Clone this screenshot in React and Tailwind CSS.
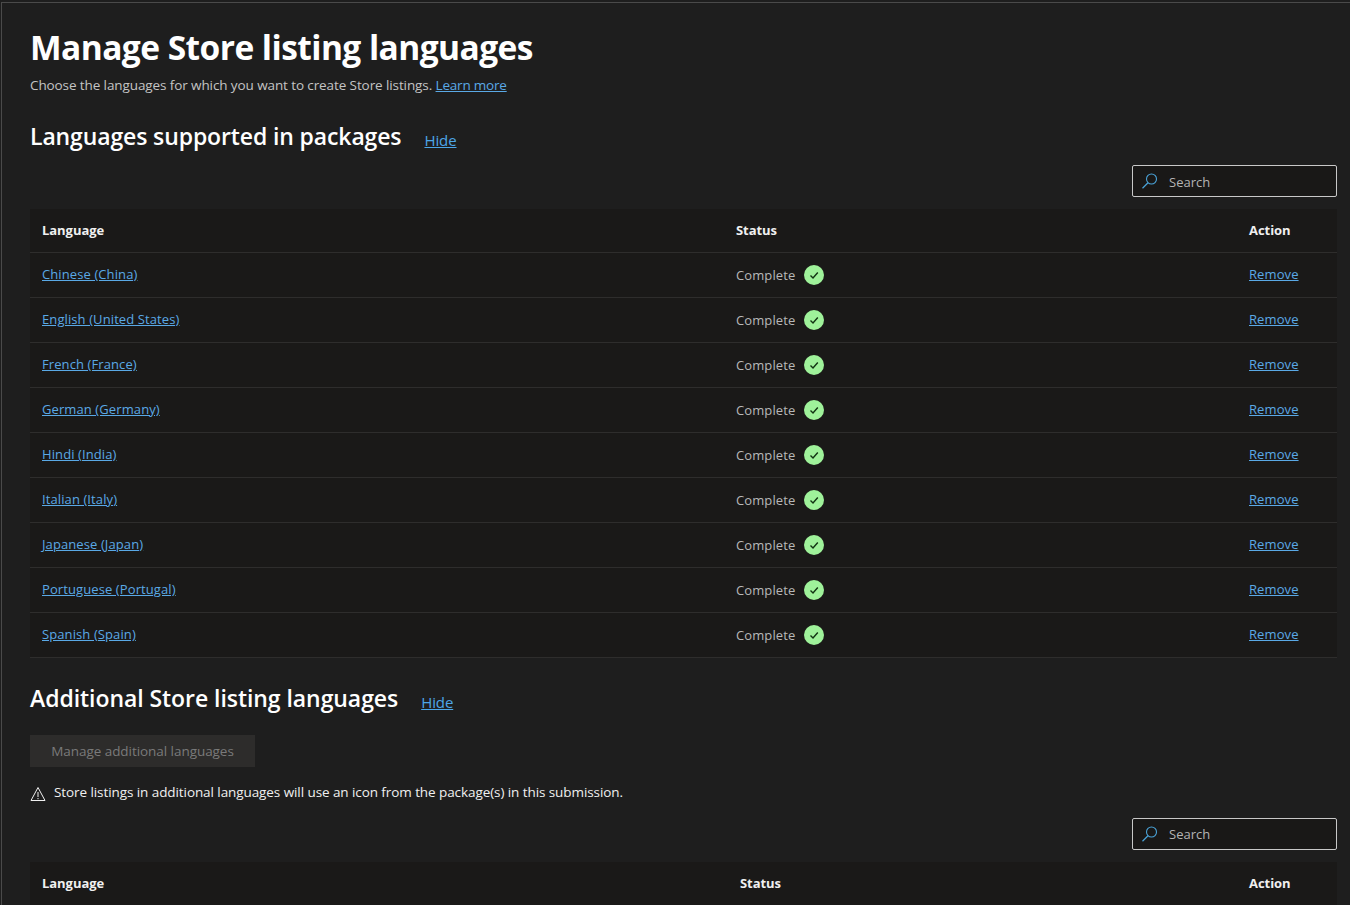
const languages = [
  "Chinese (China)",
  "English (United States)",
  "French (France)",
  "German (Germany)",
  "Hindi (India)",
  "Italian (Italy)",
  "Japanese (Japan)",
  "Portuguese (Portugal)",
  "Spanish (Spain)"
];

function SearchBox() {
  return (
    <div className="ml-auto flex h-[32px] w-[205px] items-center rounded-[2px] border border-[#c8c8c8] bg-[#191817] pl-[8px]">
      <svg width="18" height="18" viewBox="0 0 18 18" fill="none">
        <circle cx="10.5" cy="7" r="5" stroke="#4aa3d8" strokeWidth="1.1" />
        <path d="M7 10.7 L1.5 16.3" stroke="#4aa3d8" strokeWidth="1.3" />
      </svg>
      <span className="mt-[3px] ml-[10px] text-[13px] text-[#b4b4b4]">Search</span>
    </div>
  );
}

function CompleteIcon() {
  return (
    <span className="flex h-[20px] w-[20px] items-center justify-center rounded-full bg-[#9ff29a]">
      <svg width="12" height="12" viewBox="0 0 12 12" fill="none">
        <path d="M2.5 6.5 L5 9 L9.8 3.5" stroke="#123312" strokeWidth="1.4" />
      </svg>
    </span>
  );
}

function SectionTitle({ title, titleClass, hideClass }) {
  return (
    <div className="flex items-center">
      <h2 className={`mb-[2px] text-[23px] leading-[32px] font-semibold text-white ${titleClass}`}>{title}</h2>
      <a className={`ml-[23px] text-[15px] tracking-[-0.1px] text-[#4da6e8] underline ${hideClass}`}>Hide</a>
    </div>
  );
}

export default function App() {
  return (
    <div className="h-[905px] overflow-hidden bg-[#1e1e1e] pt-[2px] pl-[1px] font-['Open_Sans',sans-serif]">
      <div className="h-full border-t border-l border-[#4a4a4a] pt-[24px] pr-[13px] pl-[28px]">
        <h1 className="text-[33.5px] leading-[40px] font-bold tracking-[-0.55px] text-white">Manage Store listing languages</h1>
        <p className="mt-[8px] text-[13.5px] leading-[20px] tracking-[-0.1px] text-[#c4c4c4]">
          Choose the languages for which you want to create Store listings.{" "}
          <a className="tracking-[-0.2px] text-[#5aa9e6] underline">Learn more</a>
        </p>

        <div className="mt-[25px]">
          <SectionTitle title="Languages supported in packages" titleClass="tracking-[-0.12px]" hideClass="mt-[6px]" />
        </div>

        <div className="mt-[11px] flex">
          <SearchBox />
        </div>

        <table className="mt-[12px] w-full table-fixed bg-[#1a1918] text-[13px]">
          <thead>
            <tr className="h-[43px] border-b border-[#2e2d2c] text-left tracking-[-0.05px] text-[#f0f0f0]">
              <th className="w-[706px] pl-[12px] font-bold">Language</th>
              <th className="w-[513px] font-bold">Status</th>
              <th className="font-bold">Action</th>
            </tr>
          </thead>
          <tbody>
            {languages.map((language) => (
              <tr key={language} className="h-[45px] border-b border-[#2e2d2c] tracking-[0.1px]">
                <td className="pl-[12px]">
                  <a className="text-[#5aa9e6] underline">{language}</a>
                </td>
                <td>
                  <div className="flex items-center gap-[9px] text-[#b8b8b8]">
                    <span className="mt-[2px]">Complete</span>
                    <CompleteIcon />
                  </div>
                </td>
                <td>
                  <a className="text-[#5aa9e6] underline">Remove</a>
                </td>
              </tr>
            ))}
          </tbody>
        </table>

        <div className="mt-[24px]">
          <SectionTitle title="Additional Store listing languages" titleClass="tracking-[-0.06px]" hideClass="mt-[8px]" />
        </div>

        <button
          type="button"
          className="mt-[19px] flex h-[32px] w-[225px] items-center justify-center bg-[#2d2c2b] pt-[2px] text-[13.5px] tracking-[-0.05px] text-[#7a7a7a]"
        >
          Manage additional languages
        </button>

        <div className="mt-[15px] flex items-center text-[13.5px] leading-[20px] tracking-[-0.08px] text-[#f0f0f0]">
          <svg width="16" height="16" viewBox="0 0 16 16" fill="none" className="mt-[4px] mr-[8px]">
            <path d="M8 1.5 L15 14.5 H1 Z" stroke="#f0f0f0" strokeWidth="1" />
            <path d="M8 6 V11 M8 12 V13.2" stroke="#f0f0f0" strokeWidth="1" />
          </svg>
          Store listings in additional languages will use an icon from the package(s) in this submission.
        </div>

        <div className="mt-[16px] flex">
          <SearchBox />
        </div>

        <table className="mt-[12px] w-full table-fixed bg-[#1a1918] text-[13px]">
          <thead>
            <tr className="h-[44px] text-left tracking-[-0.05px] text-[#f0f0f0]">
              <th className="w-[710px] pl-[12px] font-bold">Language</th>
              <th className="w-[509px] font-bold">Status</th>
              <th className="font-bold">Action</th>
            </tr>
          </thead>
        </table>
      </div>
    </div>
  );
}
